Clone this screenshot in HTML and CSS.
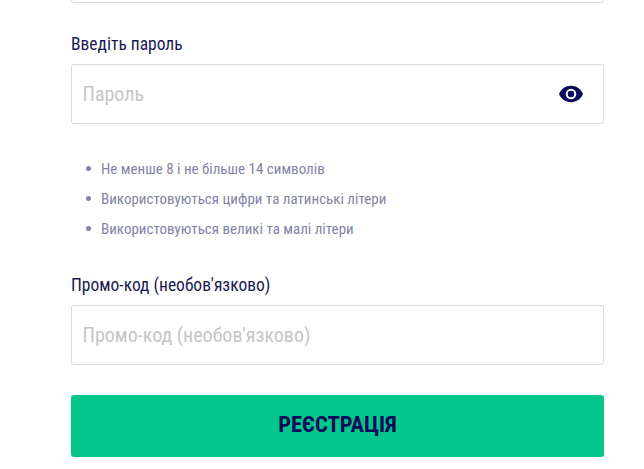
FILE: index.html
```html
<!DOCTYPE html>
<html lang="uk">
<head>
<meta charset="utf-8">
<title>Реєстрація</title>
<link rel="stylesheet" href="styles.css">
</head>
<body>
<form class="form">
  <div class="input top-input"></div>
  <label class="label label-password">Введіть пароль</label>
  <div class="input">
    <span class="placeholder">Пароль</span>
    <svg class="eye" width="26" height="18" viewBox="0 0 26 18"><path fill="#0b0b5c" d="M13 .8C7.500.8 2.900 4.200 1 9c1.900 4.800 6.500 8.200 12 8.200S23.100 13.800 25 9C23.100 4.200 18.500.8 13 .8z"/><circle cx="13" cy="9" r="5.300" fill="#fff"/><circle cx="13" cy="9" r="3.300" fill="#0b0b5c"/></svg>
  </div>
  <ul class="rules">
    <li>Не менше 8 і не більше 14 символів</li>
    <li>Використовуються цифри та латинські літери</li>
    <li>Використовуються великі та малі літери</li>
  </ul>
  <label class="label">Промо-код (необов'язково)</label>
  <div class="input">
    <span class="placeholder">Промо-код (необов'язково)</span>
  </div>
  <button class="submit" type="button">РЕЄСТРАЦІЯ</button>
</form>
</body>
</html>
```
FILE: styles.css
```css
* { box-sizing: border-box; }
html, body { margin: 0; padding: 0; background: #fff; }
body { height: 469px; overflow: hidden; font-family: "Roboto", "Liberation Sans", sans-serif; font-stretch: 75%; }
.form { display: flex; flex-direction: column; width: 533px; margin-left: 71px; margin-top: -57px; }
.input { display: flex; align-items: center; justify-content: space-between; height: 60px; padding: 0 19px 0 11px; border: 1px solid #dcdcdc; border-radius: 3px; background: #fff; flex: none; }
.label { display: block; height: 20px; margin-bottom: 10px; font-size: 17.500px; line-height: 20px; color: #1a1a52; }
.label-password { margin-top: 31px; }
.placeholder { font-size: 20px; color: #c6c6c6; margin-left: -0.500px; }
.eye { display: block; flex: none; }
.rules { margin: 30px 0 31px; padding: 0 0 0 30px; list-style: none; color: #8383a6; font-size: 15px; line-height: 30px; }
.rules li { position: relative; height: 30px; }
.rules li::before { content: ""; position: absolute; left: -15px; top: 12px; width: 5px; height: 5px; border-radius: 50%; background: #8383a6; }
.submit { height: 62px; margin-top: 30px; padding: 0 0 4px; border: 0; border-radius: 3px; background: #04c68a; color: #0b0b5c; font-family: inherit; font-stretch: 75%; font-size: 22.500px; font-weight: 700; flex: none; }
```
